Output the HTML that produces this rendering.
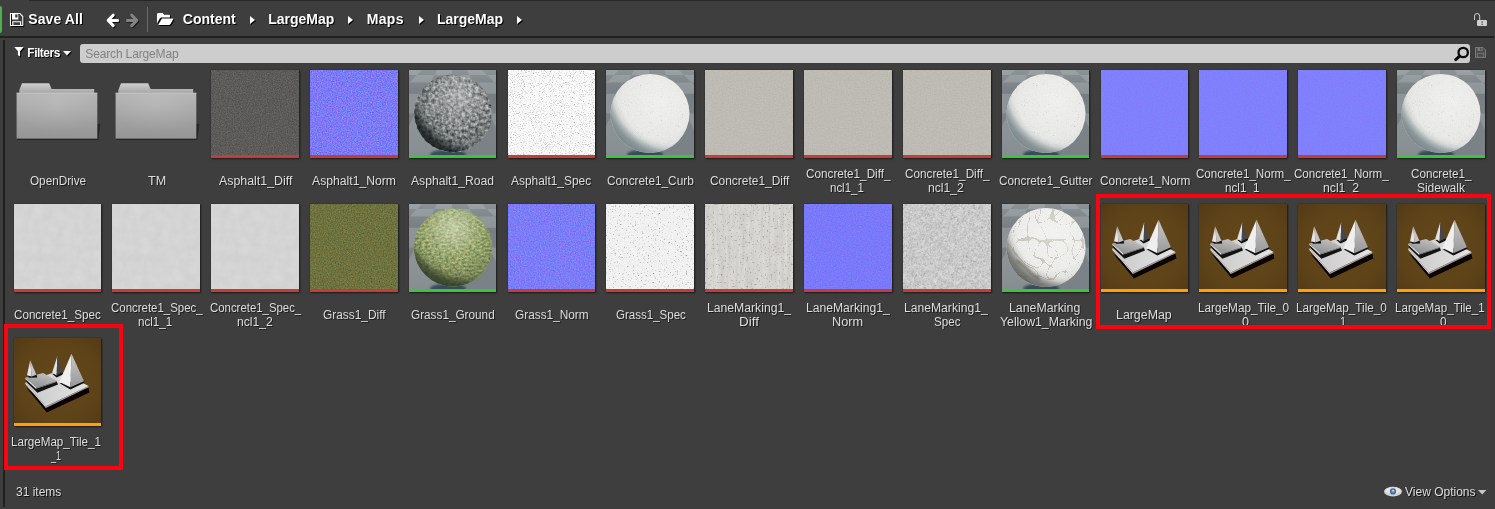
<!DOCTYPE html>
<html lang="en"><head><meta charset="utf-8"><title>Content Browser</title>
<style>
html,body{margin:0;padding:0}
body{width:1495px;height:509px;overflow:hidden;background:#3e3e3e;position:relative;font-family:"Liberation Sans",sans-serif;color:#dedede;-webkit-font-smoothing:antialiased}
.abs{position:absolute}
.hb{position:absolute;font-weight:bold;font-size:14px;line-height:16px;color:#fff;text-shadow:1px 1px 0 #000;white-space:nowrap}
.tri{position:absolute;width:0;height:0;border-left:5.5px solid #fff;border-top:4px solid transparent;border-bottom:4px solid transparent;filter:drop-shadow(1px 1px 0 #000)}
.tile{position:absolute;width:88px;height:88px;overflow:hidden;box-shadow:0 0 1.5px 0.5px rgba(0,0,0,.55),1px 1px 2px rgba(0,0,0,.45);background:#888}
.bar{position:absolute;left:0;right:0;bottom:0;height:3px}
.lbl{position:absolute;width:110px;text-align:center;font-size:12px;line-height:14px;color:#dedede;text-shadow:1px 1px 0 rgba(0,0,0,.55);white-space:nowrap}
.ln{position:absolute;display:block;transform-origin:0 0;font-size:12px;line-height:14px;color:#dedede;text-shadow:1px 1px 0 rgba(0,0,0,.55);white-space:nowrap}
.sm{position:absolute;font-size:12px;line-height:14px;white-space:nowrap;text-shadow:1px 1px 0 rgba(0,0,0,.75)}
.rbox{position:absolute;border:4px solid #fb0410;box-sizing:border-box}
</style></head><body>

<svg width="0" height="0" style="position:absolute"><defs><filter id="f_aspd" x="0" y="0" width="100%" height="100%" color-interpolation-filters="sRGB"><feTurbulence type="fractalNoise" baseFrequency="0.85" numOctaves="2" seed="3"/><feColorMatrix type="matrix" values="0.1800 0 0 0 0.2708 0.1800 0 0 0 0.2669 0.1800 0 0 0 0.2629 0 0 0 0 1"/></filter><filter id="f_aspn" x="0" y="0" width="100%" height="100%" color-interpolation-filters="sRGB"><feTurbulence type="fractalNoise" baseFrequency="0.8" numOctaves="2" seed="5"/><feColorMatrix type="matrix" values="0.4200 0 0 0 0.2763 0 0.4200 0 0 0.2684 0 0 0.0500 0 0.9397 0 0 0 0 1"/></filter><filter id="f_asps" x="0" y="0" width="100%" height="100%" color-interpolation-filters="sRGB"><feTurbulence type="fractalNoise" baseFrequency="0.9" numOctaves="2" seed="7"/><feColorMatrix type="matrix" values="2.1739 0 0 0 -0.0000 2.1739 0 0 0 -0.0000 2.1739 0 0 0 -0.0000 0 0 0 0 1"/><feComponentTransfer><feFuncR type="table" tableValues="0.5882 0.9765"/><feFuncG type="table" tableValues="0.5882 0.9765"/><feFuncB type="table" tableValues="0.5882 0.9765"/></feComponentTransfer></filter><filter id="f_cond" x="0" y="0" width="100%" height="100%" color-interpolation-filters="sRGB"><feTurbulence type="fractalNoise" baseFrequency="0.7" numOctaves="2" seed="11"/><feColorMatrix type="matrix" values="0.0700 0 0 0 0.7101 0.0700 0 0 0 0.6983 0.0700 0 0 0 0.6748 0 0 0 0 1"/></filter><filter id="f_conn" x="0" y="0" width="100%" height="100%" color-interpolation-filters="sRGB"><feTurbulence type="fractalNoise" baseFrequency="0.8" numOctaves="2" seed="13"/><feColorMatrix type="matrix" values="0.0700 0 0 0 0.4670 0 0.0700 0 0 0.4670 0 0 0.0000 0 0.9882 0 0 0 0 1"/></filter><filter id="f_cons" x="0" y="0" width="100%" height="100%" color-interpolation-filters="sRGB"><feTurbulence type="fractalNoise" baseFrequency="0.1" numOctaves="3" seed="17"/><feColorMatrix type="matrix" values="0.0450 0 0 0 0.8089 0.0450 0 0 0 0.8089 0.0450 0 0 0 0.8089 0 0 0 0 1"/></filter><filter id="f_grad" x="0" y="0" width="100%" height="100%" color-interpolation-filters="sRGB"><feTurbulence type="fractalNoise" baseFrequency="0.75" numOctaves="2" seed="19"/><feColorMatrix type="matrix" values="0.2400 0.1400 0.0000 0 0.2414 0.2400 0.0000 0.0000 0 0.3271 0.1500 0.0000 0.0000 0 0.1721 0 0 0 0 1"/></filter><filter id="f_gran" x="0" y="0" width="100%" height="100%" color-interpolation-filters="sRGB"><feTurbulence type="fractalNoise" baseFrequency="0.8" numOctaves="2" seed="23"/><feColorMatrix type="matrix" values="0.3000 0 0 0 0.3363 0 0.3000 0 0 0.3363 0 0 0.0300 0 0.9575 0 0 0 0 1"/></filter><filter id="f_gras" x="0" y="0" width="100%" height="100%" color-interpolation-filters="sRGB"><feTurbulence type="fractalNoise" baseFrequency="0.55" numOctaves="3" seed="29"/><feColorMatrix type="matrix" values="2.7027 0 0 0 -0.0000 2.7027 0 0 0 -0.0000 2.7027 0 0 0 -0.0000 0 0 0 0 1"/><feComponentTransfer><feFuncR type="table" tableValues="0.4706 1.0000"/><feFuncG type="table" tableValues="0.4706 1.0000"/><feFuncB type="table" tableValues="0.4706 1.0000"/></feComponentTransfer></filter><filter id="f_grasb" x="0" y="0" width="100%" height="100%" color-interpolation-filters="sRGB"><feTurbulence type="fractalNoise" baseFrequency="0.8" numOctaves="2" seed="30"/><feColorMatrix type="matrix" values="0.0900 0 0 0 0.9001 0.0900 0 0 0 0.9001 0.0900 0 0 0 0.9001 0 0 0 0 1"/></filter><filter id="f_land" x="0" y="0" width="100%" height="100%" color-interpolation-filters="sRGB"><feTurbulence type="fractalNoise" baseFrequency="0.3 0.02" numOctaves="3" seed="31"/><feColorMatrix type="matrix" values="0.1100 0 0 0 0.7803 0.1100 0 0 0 0.7725 0.1100 0 0 0 0.7568 0 0 0 0 1"/></filter><filter id="f_land3" x="0" y="0" width="100%" height="100%" color-interpolation-filters="sRGB"><feTurbulence type="fractalNoise" baseFrequency="0.12" numOctaves="3" seed="33"/><feColorMatrix type="matrix" values="0.5000 0 0 0 0.2520 0.5000 0 0 0 0.2520 0.5000 0 0 0 0.2520 0 0 0 0 1"/></filter><filter id="f_land2" x="0" y="0" width="100%" height="100%" color-interpolation-filters="sRGB"><feTurbulence type="fractalNoise" baseFrequency="0.5" numOctaves="3" seed="32"/><feColorMatrix type="matrix" values="2.6316 0 0 0 -0.0000 2.6316 0 0 0 -0.0000 2.6316 0 0 0 -0.0000 0 0 0 0 1"/><feComponentTransfer><feFuncR type="table" tableValues="0.5490 1.0000"/><feFuncG type="table" tableValues="0.5098 1.0000"/><feFuncB type="table" tableValues="0.4510 1.0000"/></feComponentTransfer></filter><filter id="f_lann" x="0" y="0" width="100%" height="100%" color-interpolation-filters="sRGB"><feTurbulence type="fractalNoise" baseFrequency="0.8" numOctaves="2" seed="37"/><feColorMatrix type="matrix" values="0.1700 0 0 0 0.3934 0 0.1700 0 0 0.3895 0 0 0.0200 0 0.9704 0 0 0 0 1"/></filter><filter id="f_lans" x="0" y="0" width="100%" height="100%" color-interpolation-filters="sRGB"><feTurbulence type="turbulence" baseFrequency="0.45" numOctaves="3" seed="41"/><feColorMatrix type="matrix" values="-0.3 0 0 0 0.88  -0.3 0 0 0 0.88  -0.3 0 0 0 0.88  0 0 0 0 1"/></filter><filter id="f_bump" x="0" y="0" width="100%" height="100%" color-interpolation-filters="sRGB"><feTurbulence type="fractalNoise" baseFrequency="0.3" numOctaves="2" seed="43"/><feColorMatrix type="matrix" values="0.9500 0 0 0 0.0113 0.9500 0 0 0 0.0270 0.9500 0 0 0 0.0270 0 0 0 0 1"/></filter><filter id="f_crack" x="0" y="0" width="100%" height="100%" color-interpolation-filters="sRGB"><feTurbulence type="turbulence" baseFrequency="0.055" numOctaves="1" seed="71"/><feColorMatrix type="matrix" values="50.0000 0 0 0 -0.0000 50.0000 0 0 0 -0.0000 50.0000 0 0 0 -0.0000 0 0 0 0 1"/><feComponentTransfer><feFuncR type="table" tableValues="0.5882 1.0000"/><feFuncG type="table" tableValues="0.5412 1.0000"/><feFuncB type="table" tableValues="0.4627 1.0000"/></feComponentTransfer></filter><filter id="f_fine" x="0" y="0" width="100%" height="100%" color-interpolation-filters="sRGB"><feTurbulence type="fractalNoise" baseFrequency="0.9" numOctaves="2" seed="47"/><feColorMatrix type="matrix" values="1.0000 0 0 0 0.0020 1.0000 0 0 0 0.0020 1.0000 0 0 0 0.0020 0 0 0 0 1"/></filter><filter id="f_grs" x="0" y="0" width="100%" height="100%" color-interpolation-filters="sRGB"><feTurbulence type="fractalNoise" baseFrequency="0.3 0.5" numOctaves="3" seed="53"/><feColorMatrix type="matrix" values="0.6000 0.3500 0.0000 0 0.1054 0.6000 0.0000 0.0000 0 0.3314 0.4200 0.0000 0.0000 0 0.2057 0 0 0 0 1"/></filter><filter id="f_wsp" x="0" y="0" width="100%" height="100%" color-interpolation-filters="sRGB"><feTurbulence type="fractalNoise" baseFrequency="0.9" numOctaves="2" seed="59"/><feColorMatrix type="matrix" values="3.0303 0 0 0 -0.0000 3.0303 0 0 0 -0.0000 3.0303 0 0 0 -0.0000 0 0 0 0 1"/><feComponentTransfer><feFuncR type="table" tableValues="0.4314 1.0000"/><feFuncG type="table" tableValues="0.4314 1.0000"/><feFuncB type="table" tableValues="0.3922 1.0000"/></feComponentTransfer></filter><filter id="blur05" x="-20%" y="-20%" width="140%" height="140%"><feGaussianBlur stdDeviation="0.5"/></filter><filter id="blur1" x="-20%" y="-20%" width="140%" height="140%"><feGaussianBlur stdDeviation="1.2"/></filter><filter id="blur3" x="-30%" y="-30%" width="160%" height="160%"><feGaussianBlur stdDeviation="3"/></filter>
<linearGradient id="g_fold" x1="0" y1="0" x2="0" y2="1"><stop offset="0" stop-color="#b4b4b4"/><stop offset="1" stop-color="#959595"/></linearGradient>
<radialGradient id="g_foldhl" cx="0.5" cy="0.25" r="0.6"><stop offset="0" stop-color="#fff" stop-opacity="0.13"/><stop offset="1" stop-color="#fff" stop-opacity="0"/></radialGradient>
<linearGradient id="g_tab" x1="0" y1="0" x2="0" y2="1"><stop offset="0" stop-color="#cfcfcf"/><stop offset="1" stop-color="#a6a6a6"/></linearGradient>
<linearGradient id="g_plat" x1="0" y1="0" x2="1" y2="0"><stop offset="0" stop-color="#c9c9c9"/><stop offset="1" stop-color="#e3e3e3"/></linearGradient>
<linearGradient id="g_plate" x1="0.8" y1="0" x2="0.2" y2="1"><stop offset="0" stop-color="#c4c4c4"/><stop offset="1" stop-color="#8e8e8e"/></linearGradient>
<linearGradient id="g_pyr" x1="0" y1="0" x2="0" y2="1"><stop offset="0" stop-color="#c8c8c8"/><stop offset="1" stop-color="#999"/></linearGradient>
<radialGradient id="g_map" cx="0.5" cy="0.5" r="0.75"><stop offset="0" stop-color="#64471a"/><stop offset="0.6" stop-color="#5e4319"/><stop offset="1" stop-color="#513916"/></radialGradient>
<radialGradient id="c_white" cx="0.8" cy="0.15" r="0.95"><stop offset="0.773" stop-color="#69797e" stop-opacity="0"/><stop offset="0.827" stop-color="#69797e" stop-opacity="0.123"/><stop offset="0.88" stop-color="#69797e" stop-opacity="0.451"/><stop offset="0.933" stop-color="#69797e" stop-opacity="0.722"/><stop offset="1" stop-color="#69797e" stop-opacity="0.820"/></radialGradient>
<radialGradient id="h_white" cx="0.62" cy="0.34" r="0.8"><stop offset="0" stop-color="#fff" stop-opacity="0.3"/><stop offset="0.55" stop-color="#fff" stop-opacity="0"/><stop offset="0.56" stop-color="#7f8c90" stop-opacity="0"/><stop offset="1" stop-color="#7f8c90" stop-opacity="0.22"/></radialGradient>
<radialGradient id="c_dark" cx="0.8" cy="0.15" r="0.95"><stop offset="0.773" stop-color="#101618" stop-opacity="0"/><stop offset="0.827" stop-color="#101618" stop-opacity="0.120"/><stop offset="0.88" stop-color="#101618" stop-opacity="0.440"/><stop offset="0.933" stop-color="#101618" stop-opacity="0.704"/><stop offset="1" stop-color="#101618" stop-opacity="0.800"/></radialGradient>
<radialGradient id="h_dark" cx="0.58" cy="0.28" r="0.8"><stop offset="0" stop-color="#fff" stop-opacity="0.38"/><stop offset="0.55" stop-color="#fff" stop-opacity="0"/><stop offset="0.56" stop-color="#1a2022" stop-opacity="0"/><stop offset="1" stop-color="#1a2022" stop-opacity="0.3"/></radialGradient>
<radialGradient id="c_grass" cx="0.72" cy="0.08" r="0.97"><stop offset="0.773" stop-color="#1e2c1c" stop-opacity="0"/><stop offset="0.827" stop-color="#1e2c1c" stop-opacity="0.108"/><stop offset="0.88" stop-color="#1e2c1c" stop-opacity="0.396"/><stop offset="0.933" stop-color="#1e2c1c" stop-opacity="0.634"/><stop offset="1" stop-color="#1e2c1c" stop-opacity="0.720"/></radialGradient>
<radialGradient id="h_grass" cx="0.5" cy="0.25" r="0.75"><stop offset="0" stop-color="#f4f8e4" stop-opacity="0.5"/><stop offset="0.55" stop-color="#f4f8e4" stop-opacity="0"/><stop offset="0.56" stop-color="#243020" stop-opacity="0"/><stop offset="1" stop-color="#243020" stop-opacity="0.3"/></radialGradient>
<radialGradient id="c_mark" cx="0.8" cy="0.15" r="0.95"><stop offset="0.773" stop-color="#4c4f4a" stop-opacity="0"/><stop offset="0.827" stop-color="#4c4f4a" stop-opacity="0.117"/><stop offset="0.88" stop-color="#4c4f4a" stop-opacity="0.429"/><stop offset="0.933" stop-color="#4c4f4a" stop-opacity="0.686"/><stop offset="1" stop-color="#4c4f4a" stop-opacity="0.780"/></radialGradient>
<radialGradient id="h_mark" cx="0.6" cy="0.32" r="0.8"><stop offset="0" stop-color="#fff" stop-opacity="0.3"/><stop offset="0.55" stop-color="#fff" stop-opacity="0"/><stop offset="0.56" stop-color="#77776f" stop-opacity="0"/><stop offset="1" stop-color="#77776f" stop-opacity="0.25"/></radialGradient>
<linearGradient id="g_fog" x1="0" y1="0" x2="0" y2="1"><stop offset="0" stop-color="#b4b9bb" stop-opacity="0.4"/><stop offset="0.3" stop-color="#9aa1a4" stop-opacity="0.08"/><stop offset="1" stop-color="#7f878b" stop-opacity="0.5"/></linearGradient>
<linearGradient id="g_floor" x1="0" y1="0" x2="0" y2="1"><stop offset="0" stop-color="#9aa2a6"/><stop offset="1" stop-color="#8f999e"/></linearGradient>
<clipPath id="cp_s"><circle cx="44" cy="43.5" r="39"/></clipPath>
</defs></svg>

<div class="abs" style="left:29px;top:0;width:1466px;height:1px;background:#262626"></div>
<div class="abs" style="left:0;top:6px;width:2px;height:27px;background:#4fae52;border-radius:0 2px 2px 0"></div>
<svg class="abs" style="left:10px;top:13px;overflow:visible" width="14" height="14" viewBox="0 0 14 14">
 <g transform="translate(1,1)" fill="none" stroke="#000" stroke-width="1"><path d="M0.5,0.5 H9.8 L12.8,3.5 V12.5 H0.5 Z"/></g>
 <path d="M0.5,0.5 H9.8 L12.8,3.5 V12.5 H0.5 Z" fill="none" stroke="#fff" stroke-width="1.1"/>
 <path d="M2,1 H8.3 V6.6 H2 Z M5.2,1.6 V4.4 H7.5 V1.6 Z" fill="#fff" fill-rule="evenodd"/>
 <path d="M2.8,12 V8.7 H10.6 V12" fill="none" stroke="#fff" stroke-width="1.1"/>
</svg>
<div class="hb" style="left:28.3px;top:11px;letter-spacing:0.1px">Save All</div>
<svg class="abs" style="left:105px;top:12px;overflow:visible" width="36" height="17" viewBox="0 0 36 17">
 <g fill="none" stroke-width="3" stroke-linecap="round" stroke-linejoin="round">
  <path d="M9.2,4.2 L4.2,9.4 L9.2,14.6 M4.6,9.4 H13.6" stroke="#000" stroke-opacity=".8"/>
  <path d="M8.2,3.2 L3.2,8.4 L8.2,13.6 M3.6,8.4 H12.6" stroke="#fff"/>
  <path d="M27.8,4.2 L32.8,9.4 L27.8,14.6 M32.4,9.4 H23.4" stroke="#000" stroke-opacity=".6"/>
  <path d="M26.8,3.2 L31.8,8.4 L26.8,13.6 M31.4,8.4 H22.4" stroke="#848484"/>
 </g>
</svg>
<div class="abs" style="left:147px;top:7px;width:1px;height:25px;background:#6a6a6a"></div>
<svg class="abs" style="left:157px;top:13px;overflow:visible" width="17" height="13" viewBox="0 0 17 13">
 <g id="fo">
 <path d="M0,1.2 Q0,0 1.2,0 H5.2 Q6.2,0 6.6,0.9 L7,1.8 H11.8 Q13,1.8 13,3 V4.4 H4.6 Q3.4,4.4 2.8,5.5 L0,10.6 Z"/>
 <path d="M4.9,5.6 H15.6 Q16.6,5.6 16.1,6.5 L13.4,11.3 Q12.9,12.1 11.9,12.1 H1.2 Z"/>
 </g>
</svg>

<svg class="abs" style="left:157px;top:13px;overflow:visible" width="17" height="13" viewBox="0 0 17 13"><use href="#fo" x="1" y="1" fill="#000"/><use href="#fo" fill="#fff"/></svg>
<div class="hb" style="left:182.8px;top:11px">Content</div><div class="tri" style="left:249.5px;top:16px"></div>
<div class="hb" style="left:268.2px;top:11px">LargeMap</div><div class="tri" style="left:348.3px;top:16px"></div>
<div class="hb" style="left:366.8px;top:11px;letter-spacing:0.3px">Maps</div><div class="tri" style="left:418.7px;top:16px"></div>
<div class="hb" style="left:436.9px;top:11px">LargeMap</div><div class="tri" style="left:517.3px;top:16px"></div>
<svg class="abs" style="left:1473px;top:12px;overflow:visible" width="15" height="15" viewBox="0 0 15 15">
<path d="M1.5,8 V4.2 Q1.5,1.5 4.1,1.5 Q6.7,1.5 6.7,4.2 V8" fill="none" stroke="#d0d0d0" stroke-width="1"/>
<rect x="4" y="8" width="10" height="6" rx="1" fill="#d0d0d0"/>
<rect x="8.5" y="9.3" width="1.3" height="1.5" fill="#555"/><rect x="8.5" y="11.6" width="1.3" height="1.5" fill="#555"/>
</svg>

<div class="abs" style="left:0;top:36px;width:1494px;height:2px;background:linear-gradient(#212121 0,#212121 80%,#333 100%)"></div>
<div class="abs" style="left:3px;top:40px;width:2px;height:467px;background:#212121"></div>
<svg class="abs" style="left:14px;top:47px;overflow:visible" width="11" height="11" viewBox="0 0 11 11">
 <path id="fun" d="M0.2,0 H9.8 L6.1,4.3 V9.6 L3.9,8.2 V4.3 Z"/>
</svg>
<svg class="abs" style="left:14px;top:47.4px;overflow:visible" width="11" height="11" viewBox="0 0 11 11"><use href="#fun" x="1" y="1" fill="#000"/><use href="#fun" fill="#fff"/></svg>
<div class="sm" style="left:27.3px;top:45.5px;font-weight:bold;color:#fff;letter-spacing:-0.5px;text-shadow:1px 1px 0 #000">Filters</div>
<svg class="abs" style="left:63.4px;top:50.8px;overflow:visible" width="8" height="5" viewBox="0 0 8 5"><path d="M1,1 H9 L5,5.6 Z" fill="#000"/><path d="M0,0 H8 L4,4.6 Z" fill="#fff"/></svg>
<div class="abs" style="left:80px;top:44px;width:1390px;height:19px;background:#cdcdcd;border-radius:3px"></div>
<div class="sm" style="left:85.3px;top:46.5px;color:#828282;text-shadow:none;letter-spacing:-0.15px">Search LargeMap</div>
<svg class="abs" style="left:1454px;top:46px;overflow:visible" width="16" height="16" viewBox="0 0 16 16">
 <circle cx="9.2" cy="6.5" r="4.7" fill="none" stroke="#0a0a0a" stroke-width="2.3"/>
 <path d="M5.6,10.2 L1.7,13.6" stroke="#0a0a0a" stroke-width="3" stroke-linecap="round"/>
</svg>
<svg class="abs" style="left:1475px;top:47px;overflow:visible" width="11" height="11" viewBox="0 0 11 11">
 <path d="M0.5,0.5 H8 L10.5,3 V10.5 H0.5 Z" fill="#4a4a4a" stroke="#7a7a7a" stroke-width="1"/>
 <rect x="2.5" y="0.8" width="5" height="3.2" fill="#7a7a7a"/><rect x="5" y="1.2" width="1.6" height="2" fill="#4a4a4a"/>
 <rect x="2.3" y="6.3" width="6.4" height="4" fill="none" stroke="#7a7a7a" stroke-width="0.9"/>
</svg>

<div class="abs" style="left:13px;top:70px;width:100px;height:88px"><svg width="100" height="88" viewBox="0 0 100 88" style="display:block;position:absolute;left:0;top:0;overflow:visible">
<path d="M84.2,54 L87.3,54 L85.3,70 L4,70 L4,68.6 L84.2,68.6 Z" fill="#1e1e1e" opacity="0.75"/>
<path d="M6.3,23 L6.3,20 L9,13.3 L36.2,13.3 L38.6,19 L81.2,19 L81.2,23 Z" fill="url(#g_tab)"/>
<rect x="3.6" y="22.8" width="80.7" height="45.8" fill="url(#g_fold)"/>
<rect x="3.6" y="22.8" width="80.7" height="45.8" fill="url(#g_foldhl)"/>
<rect x="3.6" y="22.8" width="80.7" height="0.8" fill="#c6c6c6"/>
</svg></div>
<span class="ln" style="left:29.61px;top:173.5px;transform:scaleX(0.9770)">OpenDrive</span>
<div class="abs" style="left:112px;top:70px;width:100px;height:88px"><svg width="100" height="88" viewBox="0 0 100 88" style="display:block;position:absolute;left:0;top:0;overflow:visible">
<path d="M84.2,54 L87.3,54 L85.3,70 L4,70 L4,68.6 L84.2,68.6 Z" fill="#1e1e1e" opacity="0.75"/>
<path d="M6.3,23 L6.3,20 L9,13.3 L36.2,13.3 L38.6,19 L81.2,19 L81.2,23 Z" fill="url(#g_tab)"/>
<rect x="3.6" y="22.8" width="80.7" height="45.8" fill="url(#g_fold)"/>
<rect x="3.6" y="22.8" width="80.7" height="45.8" fill="url(#g_foldhl)"/>
<rect x="3.6" y="22.8" width="80.7" height="0.8" fill="#c6c6c6"/>
</svg></div>
<span class="ln" style="left:148.24px;top:173.5px;transform:scaleX(1.0462)">TM</span>
<div class="tile" style="left:211px;top:70px;width:88px"><svg width="88" height="88" viewBox="0 0 88 88" style="display:block"><rect width="88" height="88" filter="url(#f_aspd)"/></svg><div class="bar" style="background:#c43d3b"></div></div>
<span class="ln" style="left:219.10px;top:173.5px;transform:scaleX(1.0316)">Asphalt1_Diff</span>
<div class="tile" style="left:310px;top:70px;width:88px"><svg width="88" height="88" viewBox="0 0 88 88" style="display:block"><rect width="88" height="88" filter="url(#f_aspn)"/></svg><div class="bar" style="background:#c43d3b"></div></div>
<span class="ln" style="left:312.00px;top:173.5px;transform:scaleX(1.0159)">Asphalt1_Norm</span>
<div class="tile" style="left:409px;top:70px;width:87px"><svg width="88" height="88" viewBox="0 0 88 88" style="display:block"><rect width="88" height="88" fill="#8c9396"/><path d="M4.1,-4.1L17.1,-4.1L13.2,-0.2L-1.6,-0.2ZM30.0,-4.1L43.0,-4.1L43.0,-0.2L28.1,-0.2ZM56.0,-4.1L68.9,-4.1L72.8,-0.2L57.9,-0.2ZM81.9,-4.1L94.8,-4.1L102.5,-0.2L87.6,-0.2ZM-16.5,-0.2L-1.6,-0.2L-9.4,5.0L-26.9,5.0ZM13.2,-0.2L28.1,-0.2L25.5,5.0L8.0,5.0ZM43.0,-0.2L57.9,-0.2L60.5,5.0L43.0,5.0ZM72.8,-0.2L87.6,-0.2L95.4,5.0L78.0,5.0ZM-9.4,5.0L8.0,5.0L0.6,12.4L-20.6,12.4ZM25.5,5.0L43.0,5.0L43.0,12.4L21.8,12.4ZM60.5,5.0L78.0,5.0L85.4,12.4L64.2,12.4ZM0.6,12.4L21.8,12.4L16.1,23.8L-10.8,23.8ZM43.0,12.4L64.2,12.4L69.9,23.8L43.0,23.8ZM85.4,12.4L106.6,12.4L123.6,23.8L96.8,23.8ZM16.1,23.8L43.0,23.8L43.0,43.5L6.2,43.5ZM69.9,23.8L96.8,23.8L116.5,43.5L79.8,43.5ZM-30.5,43.5L6.2,43.5L-15.1,86.3L-73.3,86.3ZM43.0,43.5L79.8,43.5L101.1,86.3L43.0,86.3ZM-15.1,86.3L43.0,86.3L43.0,140.0L-42.0,140.0Z" fill="#737b80"/><rect width="88" height="88" fill="url(#g_fog)"/><ellipse cx="39" cy="85" rx="18" ry="5.5" fill="#2c4152" fill-opacity="0.85" filter="url(#blur1)"/><circle cx="44" cy="43.5" r="38.5" fill="#929696"/><g clip-path="url(#cp_s)"><rect width="88" height="88" filter="url(#f_bump)" opacity="0.85"/><rect width="88" height="88" filter="url(#f_fine)" opacity="0.14" style="mix-blend-mode:overlay"/></g><circle cx="44" cy="43.5" r="38.5" fill="url(#h_dark)"/><circle cx="44" cy="43.5" r="38.5" fill="url(#c_dark)"/></svg><div class="bar" style="background:#3fc141"></div></div>
<span class="ln" style="left:411.40px;top:173.5px;transform:scaleX(1.0117)">Asphalt1_Road</span>
<div class="tile" style="left:508px;top:70px;width:87px"><svg width="88" height="88" viewBox="0 0 88 88" style="display:block"><rect width="88" height="88" filter="url(#f_asps)"/></svg><div class="bar" style="background:#c43d3b"></div></div>
<span class="ln" style="left:511.10px;top:173.5px;transform:scaleX(0.9925)">Asphalt1_Spec</span>
<div class="tile" style="left:606px;top:70px;width:88px"><svg width="88" height="88" viewBox="0 0 88 88" style="display:block"><rect width="88" height="88" fill="#8c9396"/><path d="M4.1,-4.1L17.1,-4.1L13.2,-0.2L-1.6,-0.2ZM30.0,-4.1L43.0,-4.1L43.0,-0.2L28.1,-0.2ZM56.0,-4.1L68.9,-4.1L72.8,-0.2L57.9,-0.2ZM81.9,-4.1L94.8,-4.1L102.5,-0.2L87.6,-0.2ZM-16.5,-0.2L-1.6,-0.2L-9.4,5.0L-26.9,5.0ZM13.2,-0.2L28.1,-0.2L25.5,5.0L8.0,5.0ZM43.0,-0.2L57.9,-0.2L60.5,5.0L43.0,5.0ZM72.8,-0.2L87.6,-0.2L95.4,5.0L78.0,5.0ZM-9.4,5.0L8.0,5.0L0.6,12.4L-20.6,12.4ZM25.5,5.0L43.0,5.0L43.0,12.4L21.8,12.4ZM60.5,5.0L78.0,5.0L85.4,12.4L64.2,12.4ZM0.6,12.4L21.8,12.4L16.1,23.8L-10.8,23.8ZM43.0,12.4L64.2,12.4L69.9,23.8L43.0,23.8ZM85.4,12.4L106.6,12.4L123.6,23.8L96.8,23.8ZM16.1,23.8L43.0,23.8L43.0,43.5L6.2,43.5ZM69.9,23.8L96.8,23.8L116.5,43.5L79.8,43.5ZM-30.5,43.5L6.2,43.5L-15.1,86.3L-73.3,86.3ZM43.0,43.5L79.8,43.5L101.1,86.3L43.0,86.3ZM-15.1,86.3L43.0,86.3L43.0,140.0L-42.0,140.0Z" fill="#737b80"/><rect width="88" height="88" fill="url(#g_fog)"/><ellipse cx="39" cy="85" rx="18" ry="5.5" fill="#2c4152" fill-opacity="0.85" filter="url(#blur1)"/><circle cx="44" cy="43.5" r="39.5" fill="#e7e7e4"/><g clip-path="url(#cp_s)"><rect width="88" height="88" filter="url(#f_wsp)" opacity="0.3" style="mix-blend-mode:multiply"/><rect width="88" height="88" filter="url(#f_fine)" opacity="0.07" style="mix-blend-mode:overlay"/></g><circle cx="44" cy="43.5" r="39.5" fill="url(#h_white)"/><circle cx="44" cy="43.5" r="39.5" fill="url(#c_white)"/></svg><div class="bar" style="background:#3fc141"></div></div>
<span class="ln" style="left:606.51px;top:173.5px;transform:scaleX(0.9851)">Concrete1_Curb</span>
<div class="tile" style="left:705px;top:70px;width:88px"><svg width="88" height="88" viewBox="0 0 88 88" style="display:block"><rect width="88" height="88" filter="url(#f_cond)"/></svg><div class="bar" style="background:#c43d3b"></div></div>
<span class="ln" style="left:709.50px;top:173.5px;transform:scaleX(0.9937)">Concrete1_Diff</span>
<div class="tile" style="left:804px;top:70px;width:88px"><svg width="88" height="88" viewBox="0 0 88 88" style="display:block"><rect width="88" height="88" filter="url(#f_cond)"/></svg><div class="bar" style="background:#c43d3b"></div></div>
<span class="ln" style="left:805.61px;top:166.5px;transform:scaleX(0.9774)">Concrete1_Diff_</span>
<span class="ln" style="left:829.68px;top:180.5px;transform:scaleX(0.9559)">ncl1_1</span>
<div class="tile" style="left:903px;top:70px;width:88px"><svg width="88" height="88" viewBox="0 0 88 88" style="display:block"><rect width="88" height="88" filter="url(#f_cond)"/></svg><div class="bar" style="background:#c43d3b"></div></div>
<span class="ln" style="left:904.51px;top:166.5px;transform:scaleX(0.9774)">Concrete1_Diff_</span>
<span class="ln" style="left:928.34px;top:180.5px;transform:scaleX(1.0147)">ncl1_2</span>
<div class="tile" style="left:1002px;top:70px;width:87px"><svg width="88" height="88" viewBox="0 0 88 88" style="display:block"><rect width="88" height="88" fill="#8c9396"/><path d="M4.1,-4.1L17.1,-4.1L13.2,-0.2L-1.6,-0.2ZM30.0,-4.1L43.0,-4.1L43.0,-0.2L28.1,-0.2ZM56.0,-4.1L68.9,-4.1L72.8,-0.2L57.9,-0.2ZM81.9,-4.1L94.8,-4.1L102.5,-0.2L87.6,-0.2ZM-16.5,-0.2L-1.6,-0.2L-9.4,5.0L-26.9,5.0ZM13.2,-0.2L28.1,-0.2L25.5,5.0L8.0,5.0ZM43.0,-0.2L57.9,-0.2L60.5,5.0L43.0,5.0ZM72.8,-0.2L87.6,-0.2L95.4,5.0L78.0,5.0ZM-9.4,5.0L8.0,5.0L0.6,12.4L-20.6,12.4ZM25.5,5.0L43.0,5.0L43.0,12.4L21.8,12.4ZM60.5,5.0L78.0,5.0L85.4,12.4L64.2,12.4ZM0.6,12.4L21.8,12.4L16.1,23.8L-10.8,23.8ZM43.0,12.4L64.2,12.4L69.9,23.8L43.0,23.8ZM85.4,12.4L106.6,12.4L123.6,23.8L96.8,23.8ZM16.1,23.8L43.0,23.8L43.0,43.5L6.2,43.5ZM69.9,23.8L96.8,23.8L116.5,43.5L79.8,43.5ZM-30.5,43.5L6.2,43.5L-15.1,86.3L-73.3,86.3ZM43.0,43.5L79.8,43.5L101.1,86.3L43.0,86.3ZM-15.1,86.3L43.0,86.3L43.0,140.0L-42.0,140.0Z" fill="#737b80"/><rect width="88" height="88" fill="url(#g_fog)"/><ellipse cx="39" cy="85" rx="18" ry="5.5" fill="#2c4152" fill-opacity="0.85" filter="url(#blur1)"/><circle cx="44" cy="43.5" r="39.5" fill="#e7e7e4"/><g clip-path="url(#cp_s)"><rect width="88" height="88" filter="url(#f_wsp)" opacity="0.3" style="mix-blend-mode:multiply"/><rect width="88" height="88" filter="url(#f_fine)" opacity="0.07" style="mix-blend-mode:overlay"/></g><circle cx="44" cy="43.5" r="39.5" fill="url(#h_white)"/><circle cx="44" cy="43.5" r="39.5" fill="url(#c_white)"/></svg><div class="bar" style="background:#3fc141"></div></div>
<span class="ln" style="left:998.51px;top:173.5px;transform:scaleX(0.9784)">Concrete1_Gutter</span>
<div class="tile" style="left:1101px;top:70px;width:87px"><svg width="88" height="88" viewBox="0 0 88 88" style="display:block"><rect width="88" height="88" filter="url(#f_conn)"/></svg><div class="bar" style="background:#c43d3b"></div></div>
<span class="ln" style="left:1099.61px;top:173.5px;transform:scaleX(0.9895)">Concrete1_Norm</span>
<div class="tile" style="left:1199px;top:70px;width:88px"><svg width="88" height="88" viewBox="0 0 88 88" style="display:block"><rect width="88" height="88" filter="url(#f_conn)"/></svg><div class="bar" style="background:#c43d3b"></div></div>
<span class="ln" style="left:1195.52px;top:166.5px;transform:scaleX(0.9647)">Concrete1_Norm_</span>
<span class="ln" style="left:1225.37px;top:180.5px;transform:scaleX(0.9735)">ncl1_1</span>
<div class="tile" style="left:1298px;top:70px;width:88px"><svg width="88" height="88" viewBox="0 0 88 88" style="display:block"><rect width="88" height="88" filter="url(#f_conn)"/></svg><div class="bar" style="background:#c43d3b"></div></div>
<span class="ln" style="left:1294.42px;top:166.5px;transform:scaleX(0.9657)">Concrete1_Norm_</span>
<span class="ln" style="left:1323.24px;top:180.5px;transform:scaleX(1.0176)">ncl1_2</span>
<div class="tile" style="left:1397px;top:70px;width:88px"><svg width="88" height="88" viewBox="0 0 88 88" style="display:block"><rect width="88" height="88" fill="#8c9396"/><path d="M4.1,-4.1L17.1,-4.1L13.2,-0.2L-1.6,-0.2ZM30.0,-4.1L43.0,-4.1L43.0,-0.2L28.1,-0.2ZM56.0,-4.1L68.9,-4.1L72.8,-0.2L57.9,-0.2ZM81.9,-4.1L94.8,-4.1L102.5,-0.2L87.6,-0.2ZM-16.5,-0.2L-1.6,-0.2L-9.4,5.0L-26.9,5.0ZM13.2,-0.2L28.1,-0.2L25.5,5.0L8.0,5.0ZM43.0,-0.2L57.9,-0.2L60.5,5.0L43.0,5.0ZM72.8,-0.2L87.6,-0.2L95.4,5.0L78.0,5.0ZM-9.4,5.0L8.0,5.0L0.6,12.4L-20.6,12.4ZM25.5,5.0L43.0,5.0L43.0,12.4L21.8,12.4ZM60.5,5.0L78.0,5.0L85.4,12.4L64.2,12.4ZM0.6,12.4L21.8,12.4L16.1,23.8L-10.8,23.8ZM43.0,12.4L64.2,12.4L69.9,23.8L43.0,23.8ZM85.4,12.4L106.6,12.4L123.6,23.8L96.8,23.8ZM16.1,23.8L43.0,23.8L43.0,43.5L6.2,43.5ZM69.9,23.8L96.8,23.8L116.5,43.5L79.8,43.5ZM-30.5,43.5L6.2,43.5L-15.1,86.3L-73.3,86.3ZM43.0,43.5L79.8,43.5L101.1,86.3L43.0,86.3ZM-15.1,86.3L43.0,86.3L43.0,140.0L-42.0,140.0Z" fill="#737b80"/><rect width="88" height="88" fill="url(#g_fog)"/><ellipse cx="39" cy="85" rx="18" ry="5.5" fill="#2c4152" fill-opacity="0.85" filter="url(#blur1)"/><circle cx="44" cy="43.5" r="39.5" fill="#e7e7e4"/><g clip-path="url(#cp_s)"><rect width="88" height="88" filter="url(#f_wsp)" opacity="0.3" style="mix-blend-mode:multiply"/><rect width="88" height="88" filter="url(#f_fine)" opacity="0.07" style="mix-blend-mode:overlay"/></g><circle cx="44" cy="43.5" r="39.5" fill="url(#h_white)"/><circle cx="44" cy="43.5" r="39.5" fill="url(#c_white)"/></svg><div class="bar" style="background:#3fc141"></div></div>
<span class="ln" style="left:1410.81px;top:166.5px;transform:scaleX(0.9749)">Concrete1_</span>
<span class="ln" style="left:1416.90px;top:180.5px;transform:scaleX(1.0000)">Sidewalk</span>
<div class="tile" style="left:14px;top:204px;width:87px"><svg width="88" height="88" viewBox="0 0 88 88" style="display:block"><rect width="88" height="88" filter="url(#f_cons)"/></svg><div class="bar" style="background:#c43d3b"></div></div>
<span class="ln" style="left:13.51px;top:307.5px;transform:scaleX(0.9706)">Concrete1_Spec</span>
<div class="tile" style="left:112px;top:204px;width:88px"><svg width="88" height="88" viewBox="0 0 88 88" style="display:block"><rect width="88" height="88" filter="url(#f_cons)"/></svg><div class="bar" style="background:#c43d3b"></div></div>
<span class="ln" style="left:110.92px;top:300.5px;transform:scaleX(0.9535)">Concrete1_Spec_</span>
<span class="ln" style="left:138.37px;top:314.5px;transform:scaleX(0.9676)">ncl1_1</span>
<div class="tile" style="left:211px;top:204px;width:88px"><svg width="88" height="88" viewBox="0 0 88 88" style="display:block"><rect width="88" height="88" filter="url(#f_cons)"/></svg><div class="bar" style="background:#c43d3b"></div></div>
<span class="ln" style="left:209.63px;top:300.5px;transform:scaleX(0.9493)">Concrete1_Spec_</span>
<span class="ln" style="left:237.44px;top:314.5px;transform:scaleX(1.0088)">ncl1_2</span>
<div class="tile" style="left:310px;top:204px;width:88px"><svg width="88" height="88" viewBox="0 0 88 88" style="display:block"><rect width="88" height="88" filter="url(#f_grad)"/></svg><div class="bar" style="background:#c43d3b"></div></div>
<span class="ln" style="left:322.60px;top:307.5px;transform:scaleX(0.9912)">Grass1_Diff</span>
<div class="tile" style="left:409px;top:204px;width:87px"><svg width="88" height="88" viewBox="0 0 88 88" style="display:block"><rect width="88" height="88" fill="#8c9396"/><path d="M4.1,-4.1L17.1,-4.1L13.2,-0.2L-1.6,-0.2ZM30.0,-4.1L43.0,-4.1L43.0,-0.2L28.1,-0.2ZM56.0,-4.1L68.9,-4.1L72.8,-0.2L57.9,-0.2ZM81.9,-4.1L94.8,-4.1L102.5,-0.2L87.6,-0.2ZM-16.5,-0.2L-1.6,-0.2L-9.4,5.0L-26.9,5.0ZM13.2,-0.2L28.1,-0.2L25.5,5.0L8.0,5.0ZM43.0,-0.2L57.9,-0.2L60.5,5.0L43.0,5.0ZM72.8,-0.2L87.6,-0.2L95.4,5.0L78.0,5.0ZM-9.4,5.0L8.0,5.0L0.6,12.4L-20.6,12.4ZM25.5,5.0L43.0,5.0L43.0,12.4L21.8,12.4ZM60.5,5.0L78.0,5.0L85.4,12.4L64.2,12.4ZM0.6,12.4L21.8,12.4L16.1,23.8L-10.8,23.8ZM43.0,12.4L64.2,12.4L69.9,23.8L43.0,23.8ZM85.4,12.4L106.6,12.4L123.6,23.8L96.8,23.8ZM16.1,23.8L43.0,23.8L43.0,43.5L6.2,43.5ZM69.9,23.8L96.8,23.8L116.5,43.5L79.8,43.5ZM-30.5,43.5L6.2,43.5L-15.1,86.3L-73.3,86.3ZM43.0,43.5L79.8,43.5L101.1,86.3L43.0,86.3ZM-15.1,86.3L43.0,86.3L43.0,140.0L-42.0,140.0Z" fill="#737b80"/><rect width="88" height="88" fill="url(#g_fog)"/><ellipse cx="39" cy="85" rx="18" ry="5.5" fill="#2c4152" fill-opacity="0.85" filter="url(#blur1)"/><circle cx="44" cy="43.5" r="39" fill="#96a56c"/><g clip-path="url(#cp_s)"><rect width="88" height="88" filter="url(#f_grs)" opacity="0.85"/></g><circle cx="44" cy="43.5" r="39" fill="url(#h_grass)"/><circle cx="44" cy="43.5" r="39" fill="url(#h_grass2)"/><circle cx="44" cy="43.5" r="39" fill="url(#h_grass3)"/><circle cx="44" cy="43.5" r="39" fill="url(#c_grass)"/></svg><div class="bar" style="background:#3fc141"></div></div>
<span class="ln" style="left:410.51px;top:307.5px;transform:scaleX(0.9804)">Grass1_Ground</span>
<div class="tile" style="left:508px;top:204px;width:87px"><svg width="88" height="88" viewBox="0 0 88 88" style="display:block"><rect width="88" height="88" filter="url(#f_gran)"/></svg><div class="bar" style="background:#c43d3b"></div></div>
<span class="ln" style="left:514.61px;top:307.5px;transform:scaleX(0.9864)">Grass1_Norm</span>
<div class="tile" style="left:606px;top:204px;width:88px"><svg width="88" height="88" viewBox="0 0 88 88" style="display:block"><rect width="88" height="88" filter="url(#f_grasb)"/><rect width="88" height="88" filter="url(#f_gras)" style="mix-blend-mode:multiply"/></svg><div class="bar" style="background:#c43d3b"></div></div>
<span class="ln" style="left:615.62px;top:307.5px;transform:scaleX(0.9611)">Grass1_Spec</span>
<div class="tile" style="left:705px;top:204px;width:88px"><svg width="88" height="88" viewBox="0 0 88 88" style="display:block"><rect width="88" height="88" filter="url(#f_land)"/><rect width="88" height="88" filter="url(#f_land3)" opacity="0.3" style="mix-blend-mode:overlay"/><rect width="88" height="88" filter="url(#f_land2)" style="mix-blend-mode:multiply"/></svg><div class="bar" style="background:#c43d3b"></div></div>
<span class="ln" style="left:707.38px;top:300.5px;transform:scaleX(1.0159)">LaneMarking1_</span>
<span class="ln" style="left:739.38px;top:314.5px;transform:scaleX(1.1200)">Diff</span>
<div class="tile" style="left:804px;top:204px;width:88px"><svg width="88" height="88" viewBox="0 0 88 88" style="display:block"><rect width="88" height="88" filter="url(#f_lann)"/></svg><div class="bar" style="background:#c43d3b"></div></div>
<span class="ln" style="left:805.69px;top:300.5px;transform:scaleX(1.0110)">LaneMarking1_</span>
<span class="ln" style="left:832.34px;top:314.5px;transform:scaleX(1.0582)">Norm</span>
<div class="tile" style="left:903px;top:204px;width:88px"><svg width="88" height="88" viewBox="0 0 88 88" style="display:block"><rect x="-40" y="-40" width="170" height="170" transform="rotate(28 44 44)" filter="url(#f_lans)"/></svg><div class="bar" style="background:#c43d3b"></div></div>
<span class="ln" style="left:904.39px;top:300.5px;transform:scaleX(1.0110)">LaneMarking1_</span>
<span class="ln" style="left:934.02px;top:314.5px;transform:scaleX(0.9698)">Spec</span>
<div class="tile" style="left:1002px;top:204px;width:87px"><svg width="88" height="88" viewBox="0 0 88 88" style="display:block"><rect width="88" height="88" fill="#8c9396"/><path d="M4.1,-4.1L17.1,-4.1L13.2,-0.2L-1.6,-0.2ZM30.0,-4.1L43.0,-4.1L43.0,-0.2L28.1,-0.2ZM56.0,-4.1L68.9,-4.1L72.8,-0.2L57.9,-0.2ZM81.9,-4.1L94.8,-4.1L102.5,-0.2L87.6,-0.2ZM-16.5,-0.2L-1.6,-0.2L-9.4,5.0L-26.9,5.0ZM13.2,-0.2L28.1,-0.2L25.5,5.0L8.0,5.0ZM43.0,-0.2L57.9,-0.2L60.5,5.0L43.0,5.0ZM72.8,-0.2L87.6,-0.2L95.4,5.0L78.0,5.0ZM-9.4,5.0L8.0,5.0L0.6,12.4L-20.6,12.4ZM25.5,5.0L43.0,5.0L43.0,12.4L21.8,12.4ZM60.5,5.0L78.0,5.0L85.4,12.4L64.2,12.4ZM0.6,12.4L21.8,12.4L16.1,23.8L-10.8,23.8ZM43.0,12.4L64.2,12.4L69.9,23.8L43.0,23.8ZM85.4,12.4L106.6,12.4L123.6,23.8L96.8,23.8ZM16.1,23.8L43.0,23.8L43.0,43.5L6.2,43.5ZM69.9,23.8L96.8,23.8L116.5,43.5L79.8,43.5ZM-30.5,43.5L6.2,43.5L-15.1,86.3L-73.3,86.3ZM43.0,43.5L79.8,43.5L101.1,86.3L43.0,86.3ZM-15.1,86.3L43.0,86.3L43.0,140.0L-42.0,140.0Z" fill="#737b80"/><rect width="88" height="88" fill="url(#g_fog)"/><ellipse cx="39" cy="85" rx="18" ry="5.5" fill="#2c4152" fill-opacity="0.85" filter="url(#blur1)"/><circle cx="44" cy="43.5" r="39.5" fill="#efefec"/><g clip-path="url(#cp_s)"><rect width="88" height="88" filter="url(#f_crack)" opacity="0.32" style="mix-blend-mode:multiply"/><rect width="88" height="88" filter="url(#f_fine)" opacity="0.1" style="mix-blend-mode:overlay"/><path d="M14,56 L22,62 L30,70 L38,76" fill="none" stroke="#6b6045" stroke-width="3" opacity="0.5" filter="url(#blur1)"/></g><circle cx="44" cy="43.5" r="39.5" fill="url(#h_mark)"/><circle cx="44" cy="43.5" r="39.5" fill="url(#c_mark)"/></svg><div class="bar" style="background:#3fc141"></div></div>
<span class="ln" style="left:1009.37px;top:300.5px;transform:scaleX(1.0273)">LaneMarking</span>
<span class="ln" style="left:1000.14px;top:314.5px;transform:scaleX(1.0230)">Yellow1_Marking</span>
<div class="tile" style="left:1101px;top:204px;width:87px"><svg width="88" height="88" viewBox="0 0 88 88" style="display:block"><rect width="88" height="88" fill="url(#g_map)"/>
<path d="M12.2,49.6 L32.8,74.4 L75.4,54.6 L74.4,49.5 L33,66 Z" fill="#070503" filter="url(#blur05)"/>
<path d="M11.4,44.6 L31.8,68.6 L32,70 L11.4,46 Z" fill="#f2f2f2"/>
<path d="M31.8,68.6 L74.5,47.9 L74.5,49.3 L32,70 Z" fill="#9a9a9a"/>
<path d="M11.4,44.6 L45.3,32.6 L74.5,47.9 L31.8,68.6 Z" fill="url(#g_plat)"/>
<path d="M12.6,44.2 L23.4,54.8 L44,46.6 L42.8,43.6 L22,50.4 L12,41 Z" fill="#131313"/>
<path d="M11.4,39.4 L22,49.2 L22,50.7 L11.4,40.9 Z" fill="#e4e4e4"/>
<path d="M22,49.2 L42.8,42.7 L42.8,44.1 L22,50.7 Z" fill="#7d7d7d"/>
<path d="M11.4,39.4 L29.2,34.9 L42.8,42.7 L22,49.2 Z" fill="url(#g_plate)"/>
<path d="M13.6,37.6 L15,39.8 L23.2,39.4 L22.6,36.4 Z" fill="#0f0f0f"/>
<path d="M16.2,22.3 L13,37.3 L17.6,38.6 Z" fill="#e4e4e4"/>
<path d="M16.2,22.3 L17.6,38.6 L22.4,36.8 Z" fill="#c4c4c4"/>
<path d="M38.4,36 L42.6,39.4 L49.4,36.2 L48.6,34 Z" fill="#0f0f0f"/>
<path d="M43.4,17.9 L38.2,34.6 L42.6,37.6 Z" fill="#e2e2e2"/>
<path d="M43.4,17.9 L42.6,37.6 L48.6,34 Z" fill="#474747"/>
<path d="M45.6,45.2 L56.4,51.4 L70.4,44.8 L70,42.5 Z" fill="#0d0d0d"/>
<path d="M57.5,15.7 L45.4,44 L56.4,49.3 Z" fill="#efefef"/>
<path d="M57.5,15.7 L56.4,49.3 L70,43.3 Z" fill="url(#g_pyr)"/>
</svg><div class="bar" style="background:#ffa008"></div></div>
<span class="ln" style="left:1116.37px;top:307.5px;transform:scaleX(1.0305)">LargeMap</span>
<div class="tile" style="left:1199px;top:204px;width:88px"><svg width="88" height="88" viewBox="0 0 88 88" style="display:block"><rect width="88" height="88" fill="url(#g_map)"/>
<path d="M12.2,49.6 L32.8,74.4 L75.4,54.6 L74.4,49.5 L33,66 Z" fill="#070503" filter="url(#blur05)"/>
<path d="M11.4,44.6 L31.8,68.6 L32,70 L11.4,46 Z" fill="#f2f2f2"/>
<path d="M31.8,68.6 L74.5,47.9 L74.5,49.3 L32,70 Z" fill="#9a9a9a"/>
<path d="M11.4,44.6 L45.3,32.6 L74.5,47.9 L31.8,68.6 Z" fill="url(#g_plat)"/>
<path d="M12.6,44.2 L23.4,54.8 L44,46.6 L42.8,43.6 L22,50.4 L12,41 Z" fill="#131313"/>
<path d="M11.4,39.4 L22,49.2 L22,50.7 L11.4,40.9 Z" fill="#e4e4e4"/>
<path d="M22,49.2 L42.8,42.7 L42.8,44.1 L22,50.7 Z" fill="#7d7d7d"/>
<path d="M11.4,39.4 L29.2,34.9 L42.8,42.7 L22,49.2 Z" fill="url(#g_plate)"/>
<path d="M13.6,37.6 L15,39.8 L23.2,39.4 L22.6,36.4 Z" fill="#0f0f0f"/>
<path d="M16.2,22.3 L13,37.3 L17.6,38.6 Z" fill="#e4e4e4"/>
<path d="M16.2,22.3 L17.6,38.6 L22.4,36.8 Z" fill="#c4c4c4"/>
<path d="M38.4,36 L42.6,39.4 L49.4,36.2 L48.6,34 Z" fill="#0f0f0f"/>
<path d="M43.4,17.9 L38.2,34.6 L42.6,37.6 Z" fill="#e2e2e2"/>
<path d="M43.4,17.9 L42.6,37.6 L48.6,34 Z" fill="#474747"/>
<path d="M45.6,45.2 L56.4,51.4 L70.4,44.8 L70,42.5 Z" fill="#0d0d0d"/>
<path d="M57.5,15.7 L45.4,44 L56.4,49.3 Z" fill="#efefef"/>
<path d="M57.5,15.7 L56.4,49.3 L70,43.3 Z" fill="url(#g_pyr)"/>
</svg><div class="bar" style="background:#ffa008"></div></div>
<span class="ln" style="left:1197.62px;top:300.5px;transform:scaleX(0.9803)">LargeMap_Tile_0</span>
<span class="ln" style="left:1241.68px;top:314.5px;transform:scaleX(1.0435)">0</span>
<div class="tile" style="left:1298px;top:204px;width:88px"><svg width="88" height="88" viewBox="0 0 88 88" style="display:block"><rect width="88" height="88" fill="url(#g_map)"/>
<path d="M12.2,49.6 L32.8,74.4 L75.4,54.6 L74.4,49.5 L33,66 Z" fill="#070503" filter="url(#blur05)"/>
<path d="M11.4,44.6 L31.8,68.6 L32,70 L11.4,46 Z" fill="#f2f2f2"/>
<path d="M31.8,68.6 L74.5,47.9 L74.5,49.3 L32,70 Z" fill="#9a9a9a"/>
<path d="M11.4,44.6 L45.3,32.6 L74.5,47.9 L31.8,68.6 Z" fill="url(#g_plat)"/>
<path d="M12.6,44.2 L23.4,54.8 L44,46.6 L42.8,43.6 L22,50.4 L12,41 Z" fill="#131313"/>
<path d="M11.4,39.4 L22,49.2 L22,50.7 L11.4,40.9 Z" fill="#e4e4e4"/>
<path d="M22,49.2 L42.8,42.7 L42.8,44.1 L22,50.7 Z" fill="#7d7d7d"/>
<path d="M11.4,39.4 L29.2,34.9 L42.8,42.7 L22,49.2 Z" fill="url(#g_plate)"/>
<path d="M13.6,37.6 L15,39.8 L23.2,39.4 L22.6,36.4 Z" fill="#0f0f0f"/>
<path d="M16.2,22.3 L13,37.3 L17.6,38.6 Z" fill="#e4e4e4"/>
<path d="M16.2,22.3 L17.6,38.6 L22.4,36.8 Z" fill="#c4c4c4"/>
<path d="M38.4,36 L42.6,39.4 L49.4,36.2 L48.6,34 Z" fill="#0f0f0f"/>
<path d="M43.4,17.9 L38.2,34.6 L42.6,37.6 Z" fill="#e2e2e2"/>
<path d="M43.4,17.9 L42.6,37.6 L48.6,34 Z" fill="#474747"/>
<path d="M45.6,45.2 L56.4,51.4 L70.4,44.8 L70,42.5 Z" fill="#0d0d0d"/>
<path d="M57.5,15.7 L45.4,44 L56.4,49.3 Z" fill="#efefef"/>
<path d="M57.5,15.7 L56.4,49.3 L70,43.3 Z" fill="url(#g_pyr)"/>
</svg><div class="bar" style="background:#ffa008"></div></div>
<span class="ln" style="left:1295.92px;top:300.5px;transform:scaleX(0.9770)">LargeMap_Tile_0</span>
<span class="ln" style="left:1339.82px;top:314.5px;transform:scaleX(0.9091)">1</span>
<div class="tile" style="left:1397px;top:204px;width:88px"><svg width="88" height="88" viewBox="0 0 88 88" style="display:block"><rect width="88" height="88" fill="url(#g_map)"/>
<path d="M12.2,49.6 L32.8,74.4 L75.4,54.6 L74.4,49.5 L33,66 Z" fill="#070503" filter="url(#blur05)"/>
<path d="M11.4,44.6 L31.8,68.6 L32,70 L11.4,46 Z" fill="#f2f2f2"/>
<path d="M31.8,68.6 L74.5,47.9 L74.5,49.3 L32,70 Z" fill="#9a9a9a"/>
<path d="M11.4,44.6 L45.3,32.6 L74.5,47.9 L31.8,68.6 Z" fill="url(#g_plat)"/>
<path d="M12.6,44.2 L23.4,54.8 L44,46.6 L42.8,43.6 L22,50.4 L12,41 Z" fill="#131313"/>
<path d="M11.4,39.4 L22,49.2 L22,50.7 L11.4,40.9 Z" fill="#e4e4e4"/>
<path d="M22,49.2 L42.8,42.7 L42.8,44.1 L22,50.7 Z" fill="#7d7d7d"/>
<path d="M11.4,39.4 L29.2,34.9 L42.8,42.7 L22,49.2 Z" fill="url(#g_plate)"/>
<path d="M13.6,37.6 L15,39.8 L23.2,39.4 L22.6,36.4 Z" fill="#0f0f0f"/>
<path d="M16.2,22.3 L13,37.3 L17.6,38.6 Z" fill="#e4e4e4"/>
<path d="M16.2,22.3 L17.6,38.6 L22.4,36.8 Z" fill="#c4c4c4"/>
<path d="M38.4,36 L42.6,39.4 L49.4,36.2 L48.6,34 Z" fill="#0f0f0f"/>
<path d="M43.4,17.9 L38.2,34.6 L42.6,37.6 Z" fill="#e2e2e2"/>
<path d="M43.4,17.9 L42.6,37.6 L48.6,34 Z" fill="#474747"/>
<path d="M45.6,45.2 L56.4,51.4 L70.4,44.8 L70,42.5 Z" fill="#0d0d0d"/>
<path d="M57.5,15.7 L45.4,44 L56.4,49.3 Z" fill="#efefef"/>
<path d="M57.5,15.7 L56.4,49.3 L70,43.3 Z" fill="url(#g_pyr)"/>
</svg><div class="bar" style="background:#ffa008"></div></div>
<span class="ln" style="left:1394.73px;top:300.5px;transform:scaleX(0.9650)">LargeMap_Tile_1</span>
<span class="ln" style="left:1440.30px;top:314.5px;transform:scaleX(0.9913)">0</span>
<div class="tile" style="left:14px;top:338px;width:87px"><svg width="88" height="88" viewBox="0 0 88 88" style="display:block"><rect width="88" height="88" fill="url(#g_map)"/>
<path d="M12.2,49.6 L32.8,74.4 L75.4,54.6 L74.4,49.5 L33,66 Z" fill="#070503" filter="url(#blur05)"/>
<path d="M11.4,44.6 L31.8,68.6 L32,70 L11.4,46 Z" fill="#f2f2f2"/>
<path d="M31.8,68.6 L74.5,47.9 L74.5,49.3 L32,70 Z" fill="#9a9a9a"/>
<path d="M11.4,44.6 L45.3,32.6 L74.5,47.9 L31.8,68.6 Z" fill="url(#g_plat)"/>
<path d="M12.6,44.2 L23.4,54.8 L44,46.6 L42.8,43.6 L22,50.4 L12,41 Z" fill="#131313"/>
<path d="M11.4,39.4 L22,49.2 L22,50.7 L11.4,40.9 Z" fill="#e4e4e4"/>
<path d="M22,49.2 L42.8,42.7 L42.8,44.1 L22,50.7 Z" fill="#7d7d7d"/>
<path d="M11.4,39.4 L29.2,34.9 L42.8,42.7 L22,49.2 Z" fill="url(#g_plate)"/>
<path d="M13.6,37.6 L15,39.8 L23.2,39.4 L22.6,36.4 Z" fill="#0f0f0f"/>
<path d="M16.2,22.3 L13,37.3 L17.6,38.6 Z" fill="#e4e4e4"/>
<path d="M16.2,22.3 L17.6,38.6 L22.4,36.8 Z" fill="#c4c4c4"/>
<path d="M38.4,36 L42.6,39.4 L49.4,36.2 L48.6,34 Z" fill="#0f0f0f"/>
<path d="M43.4,17.9 L38.2,34.6 L42.6,37.6 Z" fill="#e2e2e2"/>
<path d="M43.4,17.9 L42.6,37.6 L48.6,34 Z" fill="#474747"/>
<path d="M45.6,45.2 L56.4,51.4 L70.4,44.8 L70,42.5 Z" fill="#0d0d0d"/>
<path d="M57.5,15.7 L45.4,44 L56.4,49.3 Z" fill="#efefef"/>
<path d="M57.5,15.7 L56.4,49.3 L70,43.3 Z" fill="url(#g_pyr)"/>
</svg><div class="bar" style="background:#ffa008"></div></div>
<span class="ln" style="left:11.23px;top:434.5px;transform:scaleX(0.9683)">LargeMap_Tile_1</span>
<span class="ln" style="left:51.19px;top:448.5px;transform:scaleX(0.7462)">_1</span>
<div class="rbox" style="left:1096px;top:194px;width:395px;height:135px"></div>
<div class="rbox" style="left:4px;top:324px;width:119px;height:146px"></div>

<div class="sm" style="left:16px;top:484.5px">31 items</div>
<svg class="abs" style="left:1384px;top:486px;overflow:visible" width="18" height="11" viewBox="0 0 18 11">
 <ellipse cx="9" cy="5.6" rx="9" ry="4.9" fill="#d4d4d4"/><ellipse cx="9" cy="4.6" rx="7.6" ry="3.2" fill="#e6e6e6"/>
 <circle cx="9" cy="5.4" r="3.1" fill="#4b6699"/><circle cx="9" cy="5.4" r="1.8" fill="#6d88b8"/><circle cx="9.2" cy="4.6" r="0.9" fill="#dfe7f7"/>
</svg>
<div class="sm" style="left:1405px;top:484.5px">View Options</div>
<svg class="abs" style="left:1478px;top:490px" width="9" height="5" viewBox="0 0 9 5"><path d="M0,0 H8.4 L4.2,4.6 Z" fill="#c8c8c8"/></svg>

</body></html>
